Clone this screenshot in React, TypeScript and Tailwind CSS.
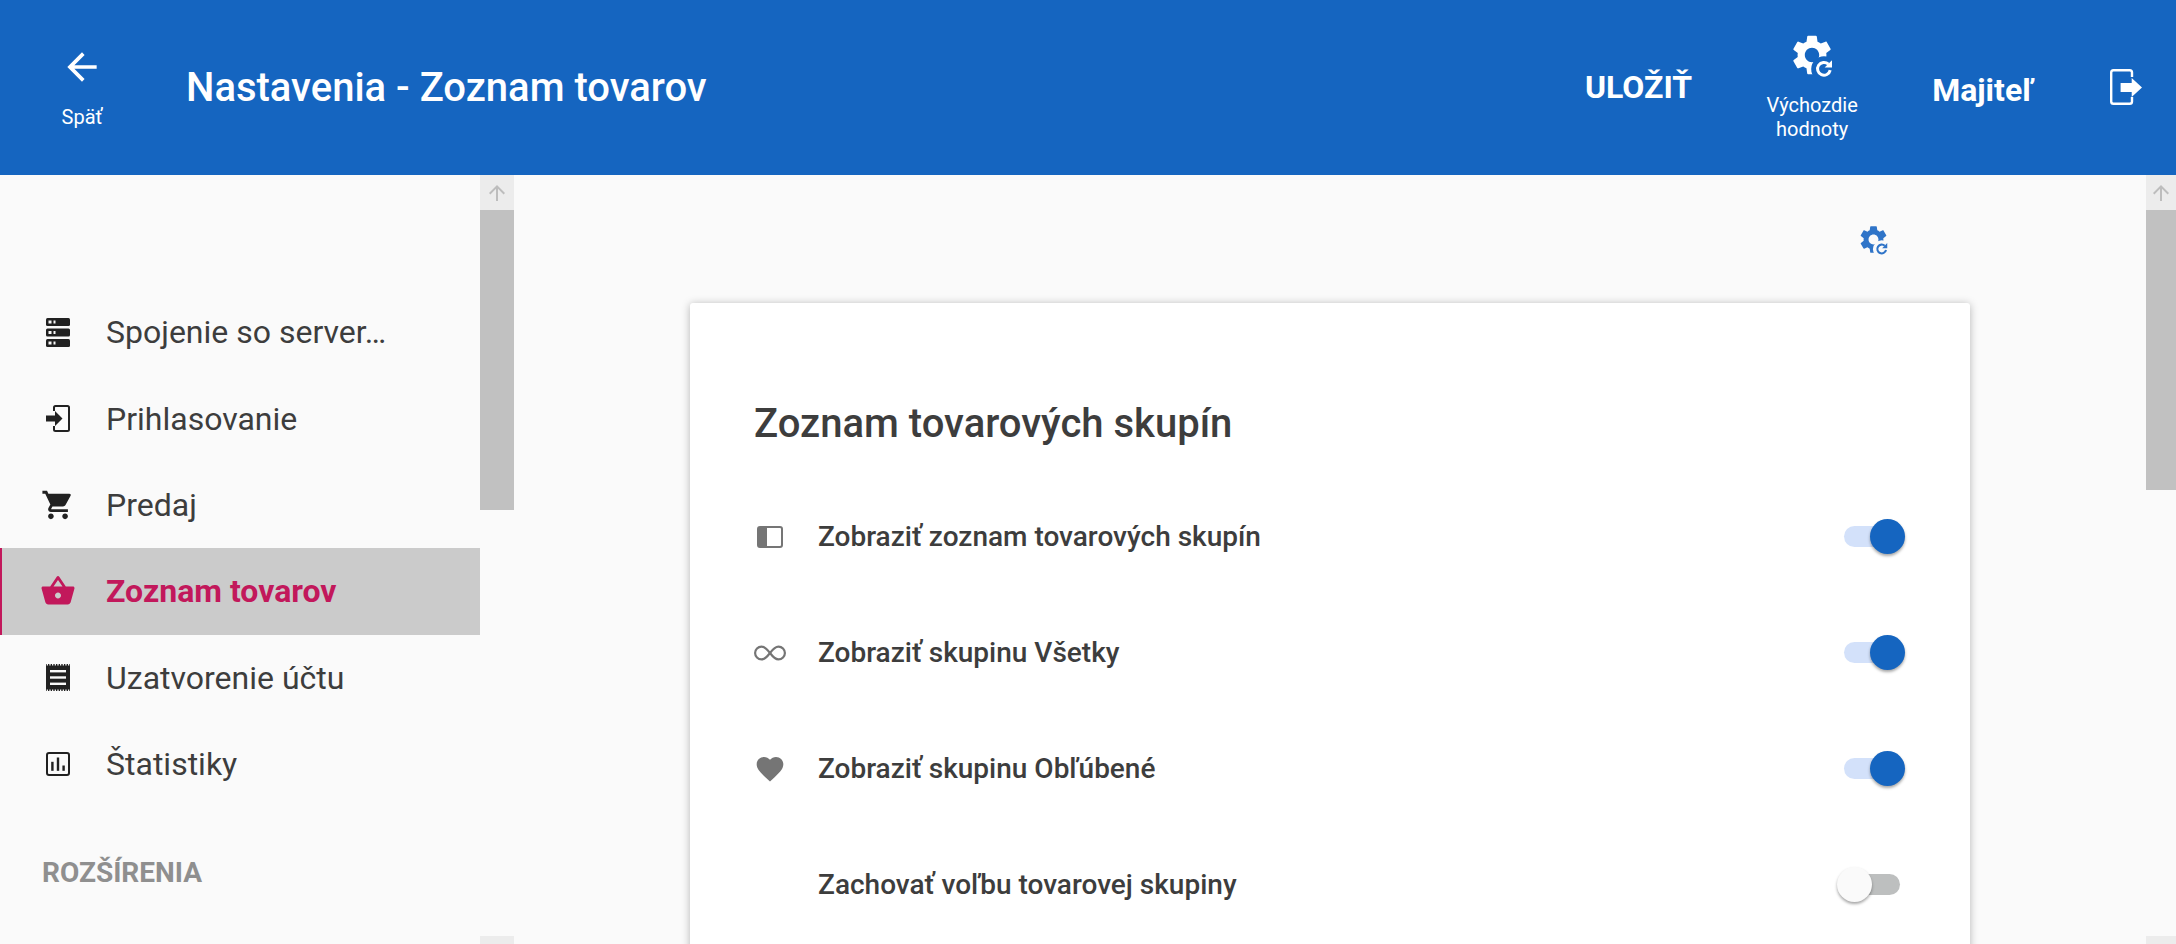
import React from "react";
import { MdArrowBack, MdArrowUpward, MdShoppingCart, MdShoppingBasket, MdFavorite } from "react-icons/md";

const GEAR =
  "M19.14,12.94c0.04-0.3,0.06-0.61,0.06-0.94c0-0.32-0.02-0.64-0.07-0.94l2.03-1.58c0.18-0.14,0.23-0.41,0.12-0.61l-1.92-3.32c-0.12-0.22-0.37-0.29-0.59-0.22l-2.39,0.96c-0.5-0.38-1.03-0.7-1.62-0.94L14.4,2.81c-0.04-0.24-0.24-0.41-0.48-0.41h-3.84c-0.24,0-0.43,0.17-0.47,0.41L9.25,5.35C8.66,5.59,8.12,5.92,7.63,6.29L5.24,5.33c-0.22-0.08-0.47,0-0.59,0.22L2.74,8.87C2.62,9.08,2.66,9.34,2.86,9.48l2.03,1.58C4.84,11.36,4.8,11.69,4.8,12s0.02,0.64,0.07,0.94l-2.03,1.58c-0.18,0.14-0.23,0.41-0.12,0.61l1.92,3.32c0.12,0.22,0.37,0.29,0.59,0.22l2.39-0.96c0.5,0.38,1.03,0.7,1.62,0.94l0.36,2.54c0.05,0.24,0.24,0.41,0.48,0.41h3.84c0.24,0,0.44-0.17,0.47-0.41l0.36-2.54c0.59-0.24,1.13-0.56,1.62-0.94l2.39,0.96c0.22,0.08,0.47,0,0.59-0.22l1.92-3.32c0.12-0.22,0.07-0.47-0.12-0.61L19.14,12.94z M12,15.6c-1.98,0-3.6-1.62-3.6-3.6s1.62-3.6,3.6-3.6s3.6,1.62,3.6,3.6S13.98,15.6,12,15.6z";

function GearRefresh({ id, className }: { id: string; className: string }) {
  return (
    <svg viewBox="0 0 24 24" className={className} fill="currentColor">
      <mask id={id}>
        <rect width="24" height="24" fill="white" />
        <circle cx="18" cy="19" r="6.4" fill="black" />
      </mask>
      <path d={GEAR} mask={`url(#${id})`} fillRule="evenodd" />
      <path d="M21.1 19.6a3.2 3.2 0 1 1-.9-3" fill="none" stroke="currentColor" strokeWidth="1.5" />
      <path d="M22 14.6v3.7h-3.7z" />
    </svg>
  );
}

function StorageIcon() {
  return (
    <svg viewBox="0 0 24 29" className="w-[24px] h-[29px]">
      {[0, 10.5, 21].map((y) => (
        <g key={y}>
          <rect x="0" y={y} width="24" height="8" rx="1.5" fill="#212121" />
          <rect x="2.5" y={y + 2.5} width="3" height="3" fill="#fafafa" />
          <rect x="7.5" y={y + 2.5} width="2" height="3" fill="#fafafa" />
        </g>
      ))}
    </svg>
  );
}

function LoginIcon() {
  return (
    <svg viewBox="0 0 24 27" className="w-[24px] h-[27px]" fill="none">
      <path d="M8 6V2.5A1.5 1.5 0 0 1 9.5 1H21.5A1.5 1.5 0 0 1 23 2.5V24.5A1.5 1.5 0 0 1 21.5 26H9.5A1.5 1.5 0 0 1 8 24.5V21" stroke="#212121" strokeWidth="2" />
      <path d="M0 10.5H9V6L16.5 13.5L9 21V16.5H0z" fill="#212121" />
    </svg>
  );
}

function ReceiptIcon() {
  const teeth = Array.from({ length: 9 }, (_, i) => i * 2.66);
  return (
    <svg viewBox="0 0 24 27" className="w-[24px] h-[27px]">
      <rect x="0" y="0" width="24" height="27" fill="#212121" />
      {teeth.map((x) => (
        <g key={x}>
          <rect x={x + 0.7} y="0" width="1.3" height="1.5" fill="#fafafa" />
          <rect x={x + 0.7} y="25.5" width="1.3" height="1.5" fill="#fafafa" />
        </g>
      ))}
      <rect x="4" y="6" width="16" height="2.4" fill="#fafafa" />
      <rect x="4" y="12.3" width="16" height="2.4" fill="#fafafa" />
      <rect x="4" y="18.6" width="16" height="2.4" fill="#fafafa" />
    </svg>
  );
}

function ChartIcon() {
  return (
    <svg viewBox="0 0 24 24" className="w-[24px] h-[24px]" fill="none">
      <rect x="1" y="1" width="22" height="22" rx="2" stroke="#212121" strokeWidth="2" />
      <rect x="5.2" y="9.8" width="2.4" height="9" fill="#212121" />
      <rect x="10.8" y="5.5" width="2.4" height="13.3" fill="#212121" />
      <rect x="16.4" y="13.5" width="2.4" height="5.3" fill="#212121" />
    </svg>
  );
}

function PanelIcon() {
  return (
    <svg viewBox="0 0 26 22" className="w-[26px] h-[22px]" fill="none">
      <rect x="1" y="1" width="24" height="20" rx="2" stroke="#757575" strokeWidth="2" fill="#ffffff" />
      <path d="M2 2H10V20H2z" fill="#757575" />
    </svg>
  );
}

function InfinityIcon() {
  return (
    <svg viewBox="0 0 32 16" className="w-[32px] h-[16px]" fill="none">
      <path
        d="M16 8C13 4 11 1.6 7.5 1.6a6.4 6.4 0 0 0 0 12.8C11 14.4 13 12 16 8C19 4 21 1.6 24.5 1.6a6.4 6.4 0 0 1 0 12.8C21 14.4 19 12 16 8z"
        stroke="#757575"
        strokeWidth="2.2"
      />
    </svg>
  );
}

function LogoutIcon() {
  return (
    <svg viewBox="0 0 32 36" className="w-[32px] h-[36px]" fill="none">
      <path d="M22 8V3.5A2.3 2.3 0 0 0 19.7 1.2H3.5A2.3 2.3 0 0 0 1.2 3.5V32.5A2.3 2.3 0 0 0 3.5 34.8H19.7A2.3 2.3 0 0 0 22 32.5V28" stroke="white" strokeWidth="2.4" />
      <path d="M10.6 14H21.7V9L32 18.5L21.7 28V23H10.6z" fill="white" />
    </svg>
  );
}

function Scrollbar({ thumb, width }: { thumb: string; width: string }) {
  return (
    <div className={`${width} h-[796px] shrink-0 flex flex-col`}>
      <div className="h-[35px] bg-[#ececec] flex items-center justify-center text-[#bdbdbd]">
        <MdArrowUpward size={24} />
      </div>
      <div className={`${thumb} bg-[#c1c1c1]`} />
      <div className="flex-1" />
      <div className="h-[35px] bg-[#ececec]" />
    </div>
  );
}

const NAV: { label: string; icon: React.ReactNode; active?: boolean }[] = [
  { label: "Spojenie so server…", icon: <StorageIcon /> },
  { label: "Prihlasovanie", icon: <LoginIcon /> },
  { label: "Predaj", icon: <MdShoppingCart size={34} className="text-[#212121]" /> },
  { label: "Zoznam tovarov", icon: <MdShoppingBasket size={36} className="text-[#c2185b]" />, active: true },
  { label: "Uzatvorenie účtu", icon: <ReceiptIcon /> },
  { label: "Štatistiky", icon: <ChartIcon /> },
];

const ROWS: { label: string; icon?: React.ReactNode; on: boolean }[] = [
  { label: "Zobraziť zoznam tovarových skupín", icon: <PanelIcon />, on: true },
  { label: "Zobraziť skupinu Všetky", icon: <InfinityIcon />, on: true },
  { label: "Zobraziť skupinu Obľúbené", icon: <MdFavorite size={32} className="text-[#757575]" />, on: true },
  { label: "Zachovať voľbu tovarovej skupiny", on: false },
];

function Toggle({ on }: { on: boolean }) {
  return (
    <div className="relative w-[68px] h-[35px] mb-[1px]">
      <div className={`absolute left-[7px] top-[7px] w-[56px] h-[21px] rounded-full ${on ? "bg-[#d3e1fa]" : "bg-[#bdbfbf]"}`} />
      <div
        className={`absolute top-0 w-[35px] h-[35px] rounded-full shadow-[0_2px_3px_rgba(0,0,0,0.35)] ${
          on ? "right-0 bg-[#1565c0]" : "left-0 bg-[#fafafa]"
        }`}
      />
    </div>
  );
}

export default function App() {
  return (
    <div className="h-[944px] w-[2176px] overflow-hidden bg-[#fafafa] font-['Roboto',sans-serif] text-[#3d3d3d]">
      <header className="h-[175px] bg-[#1565c0] text-white flex items-start">
        <div className="w-[186px] shrink-0 flex">
          <div className="w-[164px] pt-[45px] flex flex-col items-center">
            <MdArrowBack size={44} />
            <span className="mt-[16px] text-[20px] leading-[24px]">Späť</span>
          </div>
        </div>
        <h1 className="mt-[63px] text-[40px] leading-[50px] font-medium whitespace-nowrap">Nastavenia - Zoznam tovarov</h1>
        <div className="ml-auto flex items-start">
          <span className="mt-[67px] text-[32px] leading-[40px] font-bold">ULOŽIŤ</span>
          <div className="ml-[43px] w-[154px] pt-[31px] flex flex-col items-center text-center">
            <GearRefresh id="g1" className="w-[48px] h-[48px]" />
            <span className="mt-[14px] text-[20px] leading-[24px]">Výchozdie<br />hodnoty</span>
          </div>
          <span className="ml-[43px] mt-[70px] text-[32px] leading-[40px] font-bold">Majiteľ</span>
          <div className="ml-[77px] mr-[34px] mt-[69px]">
            <LogoutIcon />
          </div>
        </div>
      </header>

      <div className="flex h-[769px] items-start">
        <aside className="w-[514px] shrink-0 flex">
          <div className="w-[480px] shrink-0 pt-[114px]">
            <nav className="flex flex-col">
              {NAV.map((n) => (
                <div
                  key={n.label}
                  className={`h-[86.4px] flex items-center pl-[26px] border-l-2 ${
                    n.active ? "border-[#c2185b] bg-[#cbcbcb] text-[#c2185b] font-bold" : "border-transparent"
                  }`}
                >
                  <div className="w-[60px] mr-[18px] flex justify-center">{n.icon}</div>
                  <span className="text-[32px] leading-[40px] whitespace-nowrap">{n.label}</span>
                </div>
              ))}
            </nav>
            <div className="mt-[50px] pl-[42px] text-[28px] leading-[32px] font-bold text-[#8f8f8f]">ROZŠÍRENIA</div>
          </div>
          <Scrollbar width="w-[34px]" thumb="h-[300px]" />
        </aside>

        <main className="flex-1 min-w-0">
          <div className="w-[1280px] mx-auto">
            <div className="h-[128px] flex items-center justify-end pr-[80px]">
              <GearRefresh id="g2" className="w-[33px] h-[33px] text-[#2f74c8]" />
            </div>
            <section className="h-[700px] bg-white rounded-[3px] shadow-[0_1px_8px_rgba(0,0,0,0.28)] pl-[64px] pr-[65px] pt-[97px]">
              <h2 className="text-[40px] leading-[48px] font-medium mb-[31px] whitespace-nowrap">Zoznam tovarových skupín</h2>
              {ROWS.map((r) => (
                <div key={r.label} className="h-[116px] flex items-center">
                  <div className="w-[64px] shrink-0 flex">
                    <div className="w-[32px] flex justify-center">{r.icon}</div>
                  </div>
                  <span className="text-[28px] leading-[32px] font-medium whitespace-nowrap">{r.label}</span>
                  <div className="ml-auto">
                    <Toggle on={r.on} />
                  </div>
                </div>
              ))}
            </section>
          </div>
        </main>

        <Scrollbar width="w-[30px]" thumb="h-[280px]" />
      </div>
    </div>
  );
}
